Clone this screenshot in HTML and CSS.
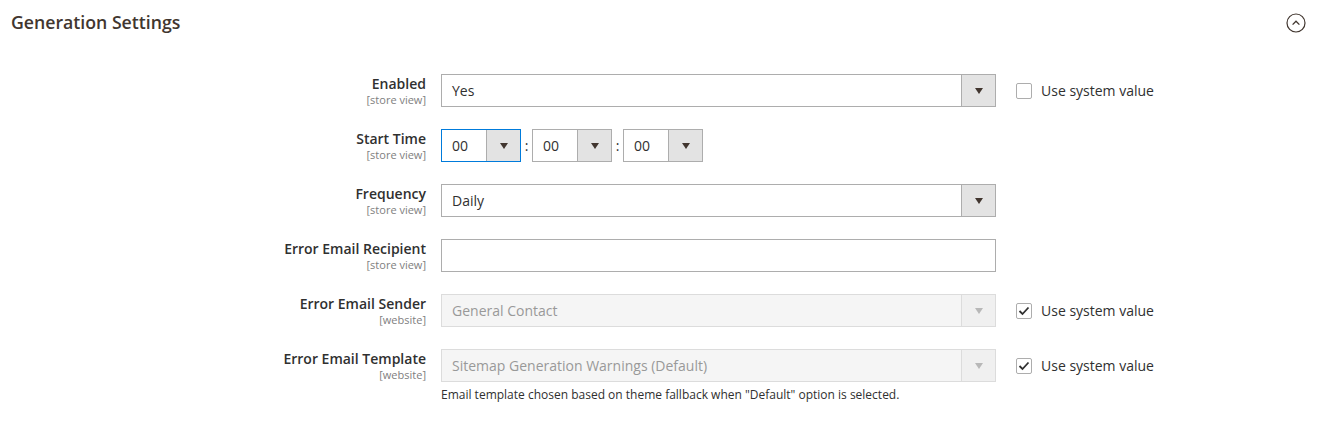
FILE: index.html
```html
<!DOCTYPE html>
<html>
<head>
<meta charset="utf-8">
<link rel="stylesheet" href="styles.css">
</head>
<body>
<div class="section">
  <div class="section-head">
    <h2 class="title">Generation Settings</h2>
    <span class="collapse">
      <svg width="20" height="20" viewBox="0 0 20 20"><circle cx="10" cy="10" r="9" fill="none" stroke="#41362f" stroke-width="1.2"/><path d="M6.6 11.6 L10 8.2 L13.4 11.6" fill="none" stroke="#41362f" stroke-width="1.3"/></svg>
    </span>
  </div>
  <div class="form">
    <div class="row">
      <div class="label"><span class="name">Enabled</span><span class="scope">[store view]</span></div>
      <div class="control">
        <div class="select wide"><span class="val">Yes</span><span class="btn"><i class="arrow"></i></span></div>
      </div>
      <label class="sys"><span class="cb"></span>Use system value</label>
    </div>
    <div class="row">
      <div class="label"><span class="name">Start Time</span><span class="scope">[store view]</span></div>
      <div class="control time">
        <div class="select small focus"><span class="val">00</span><span class="btn"><i class="arrow"></i></span></div>
        <span class="colon">:</span>
        <div class="select small"><span class="val">00</span><span class="btn"><i class="arrow"></i></span></div>
        <span class="colon">:</span>
        <div class="select small"><span class="val">00</span><span class="btn"><i class="arrow"></i></span></div>
      </div>
    </div>
    <div class="row">
      <div class="label"><span class="name">Frequency</span><span class="scope">[store view]</span></div>
      <div class="control">
        <div class="select wide"><span class="val">Daily</span><span class="btn"><i class="arrow"></i></span></div>
      </div>
    </div>
    <div class="row">
      <div class="label"><span class="name">Error Email Recipient</span><span class="scope">[store view]</span></div>
      <div class="control">
        <div class="input wide"></div>
      </div>
    </div>
    <div class="row">
      <div class="label"><span class="name">Error Email Sender</span><span class="scope">[website]</span></div>
      <div class="control">
        <div class="select wide disabled"><span class="val">General Contact</span><span class="btn"><i class="arrow"></i></span></div>
      </div>
      <label class="sys"><span class="cb checked"><svg width="12" height="10" viewBox="0 0 12 10"><path d="M1.5 5 L4.5 8 L10.5 1.5" fill="none" stroke="#303030" stroke-width="1.8"/></svg></span>Use system value</label>
    </div>
    <div class="row">
      <div class="label"><span class="name">Error Email Template</span><span class="scope">[website]</span></div>
      <div class="control">
        <div class="select wide disabled"><span class="val">Sitemap Generation Warnings (Default)</span><span class="btn"><i class="arrow"></i></span></div>
        <p class="note">Email template chosen based on theme fallback when "Default" option is selected.</p>
      </div>
      <label class="sys"><span class="cb checked"><svg width="12" height="10" viewBox="0 0 12 10"><path d="M1.5 5 L4.5 8 L10.5 1.5" fill="none" stroke="#303030" stroke-width="1.8"/></svg></span>Use system value</label>
    </div>
  </div>
</div>
</body>
</html>
```
FILE: styles.css
```css
* { box-sizing: border-box; }
body {
  margin: 0;
  background: #fff;
  font-family: "Open Sans", "Liberation Sans", sans-serif;
  color: #303030;
}
.section { padding: 0 0 0 11px; }
.section-head {
  display: flex;
  justify-content: space-between;
  align-items: center;
  height: 44px;
  padding-right: 22px;
}
.title {
  margin: 0;
  font-size: 17.7px;
  font-weight: 600;
  color: #41362f;
  line-height: 24px;
}
.collapse { display: flex; padding-top: 2px; }
.form { padding-top: 30px; }
.row {
  display: flex;
  align-items: flex-start;
  margin-bottom: 22px;
}
.label {
  width: 415px;
  display: flex;
  flex-direction: column;
  align-items: flex-end;
  padding-top: 1px;
}
.name {
  font-size: 14px;
  font-weight: 600;
  line-height: 18px;
  color: #303030;
}
.scope {
  font-size: 11px;
  line-height: 13px;
  color: #808080;
}
.control { margin-left: 15px; width: 555px; }
.control.time { display: flex; align-items: center; }
.select, .input {
  height: 33px;
  border: 1px solid #adadad;
  background: #fff;
  display: flex;
  align-items: stretch;
  font-size: 14px;
}
.wide { width: 555px; }
.small { width: 80px; }
.select .val {
  flex: 1;
  padding-left: 10px;
  line-height: 31px;
  white-space: nowrap;
  overflow: hidden;
}
.select .btn {
  width: 34px;
  background: #e3e3e3;
  border-left: 1px solid #adadad;
  display: flex;
  align-items: center;
  justify-content: center;
}
.arrow {
  width: 0; height: 0;
  border-left: 4.5px solid transparent;
  border-right: 4.5px solid transparent;
  border-top: 6px solid #41362f;
}
.focus { border-color: #007bdb; }
.colon {
  width: 11px;
  text-align: center;
  font-size: 14px;
  color: #303030;
}
.disabled {
  background: #f5f5f5;
  border-color: #dcdcdc;
  color: #999;
}
.disabled .btn { background: #f0f0f0; border-left-color: #dcdcdc; }
.disabled .arrow { border-top-color: #b8b8b8; }
.note {
  margin: 5px 0 0;
  font-size: 12px;
  line-height: 16px;
  color: #303030;
}
.sys {
  margin-left: 20px;
  display: flex;
  align-items: center;
  font-size: 14px;
  height: 33px;
  color: #303030;
}
.cb {
  width: 16px; height: 16px;
  border: 1px solid #adadad;
  border-radius: 2px;
  background: #fff;
  margin-right: 9px;
  display: flex;
  align-items: center;
  justify-content: center;
}
```
